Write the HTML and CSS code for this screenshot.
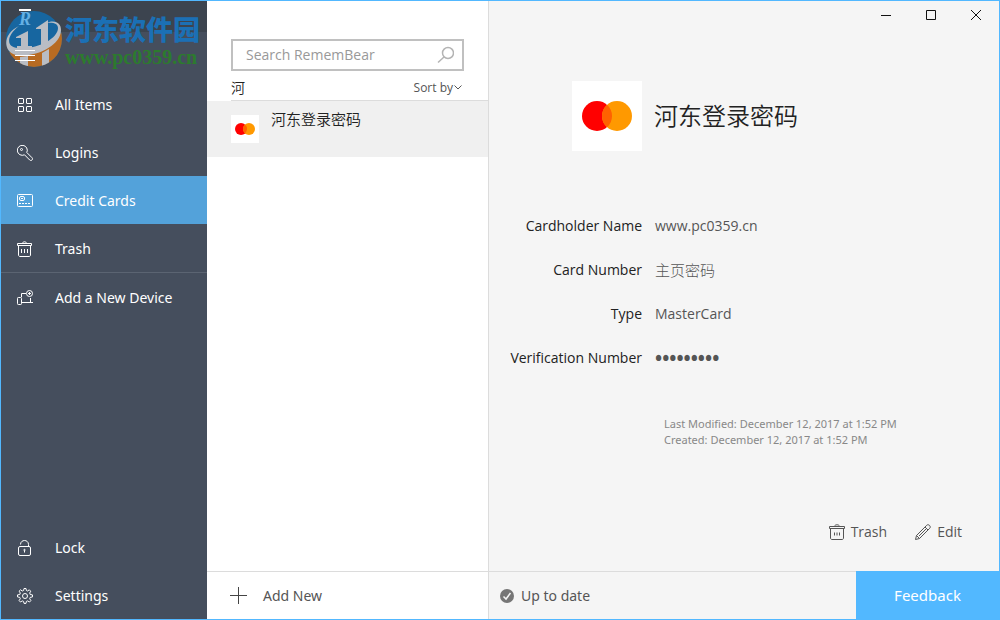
FILE: index.html
```html
<!DOCTYPE html>
<html lang="en">
<head>
    <meta charset="UTF-8">
    <meta name="viewport" content="width=device-width, initial-scale=1.0">
    <title>RememBear</title>
    <link rel="stylesheet" href="styles.css">
</head>
<body>
    <div class="window">
        <!-- Sidebar -->
        <aside class="sidebar">
            <div class="sidebar-top">
                <button class="menu-button" aria-label="Menu">
                    <svg width="20" height="14" viewBox="0 0 20 14" fill="none" stroke="#fff"><path d="M0 1.500h20M0 6.500h20M0 11.500h20"/></svg>
                </button>
            </div>
            <nav class="nav">
                <a href="#all" class="nav-item">
                    <svg class="icon" viewBox="0 0 16 16"><rect x="1.5" y="1.5" width="5" height="5" rx=".5"/><rect x="9.500" y="1.5" width="5" height="5" rx=".5"/><rect x="1.5" y="9.500" width="5" height="5" rx=".5"/><rect x="9.500" y="9.500" width="5" height="5" rx=".5"/></svg>
                    All Items
                </a>
                <a href="#logins" class="nav-item">
                    <svg class="icon" viewBox="0 0 16 16"><path d="M9.800 7.500l5.300 5.300c.9.900.3 2.700-1.300 2.700-.5 0-.8-.2-1.100-.5L7.500 9.800A5 5 0 1 1 9.800 7.500z"/><circle cx="4.500" cy="4.500" r="1"/></svg>
                    Logins
                </a>
                <a href="#cards" class="nav-item active">
                    <svg class="icon" viewBox="0 0 16 16"><rect x=".5" y="1.500" width="15" height="12" rx="1"/><rect x="2.500" y="3.500" width="5" height="4" rx="1.500"/><path d="M4 5.500h2"/><path d="M2 10.500h12" stroke-dasharray="2 1"/></svg>
                    Credit Cards
                </a>
                <a href="#trash" class="nav-item">
                    <svg class="icon" viewBox="0 0 16 16"><path d="M.5 4.500v-2h14v2zM1.500 4.500v9.500c0 .8.500 1.500 1.500 1.500h9c1 0 1.500-.7 1.500-1.500V4.500M5.500 2.500c0-2.300 4-2.300 4 0M4.500 8v4M7.500 8v4M10.500 8v4"/></svg>
                    Trash
                </a>
                <a href="#device" class="nav-item device">
                    <svg class="icon" viewBox="0 0 16 16"><path d="M9 3.500H4.500V7M13.500 8v4.500M5 12.500h11"/><rect x=".5" y="7.500" width="4" height="7" rx=".8"/><circle cx="12.500" cy="3.500" r="3"/><path d="M12.500 2v3M11 3.500h3"/></svg>
                    Add a New Device
                </a>
            </nav>
            <nav class="nav nav-bottom">
                <a href="#lock" class="nav-item">
                    <svg class="icon" viewBox="0 0 16 16"><rect x="1.500" y="6.500" width="12" height="9" rx="1.500"/><path d="M3.500 4.500c0-5.300 8-5.300 8 0v2M7.500 10.500v2"/><circle cx="7.500" cy="10" r=".7"/></svg>
                    Lock
                </a>
                <a href="#settings" class="nav-item">
                    <svg class="icon" viewBox="0 0 16 16"><path d="M6.600 2.500L7 .5h2l.4 2 1.200.5 1.700-1.200 1.400 1.400L12.700 5l.5 1.500 2.300.4v2l-2.300.5-.5 1.300 1.200 1.900-1.400 1.400-1.900-1.100-1.200.5-.4 2H7l-.4-2-1.300-.5-1.800 1.100-1.400-1.400 1.200-1.900-.5-1.300-2.300-.5v-2l2.300-.4L3.300 5 2.100 3.200l1.400-1.400L5.300 3z"/><circle cx="8" cy="8" r="2.500"/></svg>
                    Settings
                </a>
            </nav>
            <div class="watermark">
                <svg width="60" height="60" viewBox="0 0 60 60">
                    <defs><clipPath id="disc"><circle cx="30" cy="30" r="28"/></clipPath></defs>
                    <g clip-path="url(#disc)">
                        <path fill="#1766a0" d="M0 0h60v60H0z"/>
                        <path fill="#b86b22" d="M0 40c7 5 18 6 30 3 14-3 23-10 28-22l4 2v38H0z"/>
                        <path fill="#b9bdc4" d="M16 48l8-1v13h-8zM38 44l7-4v15l-7 5z"/>
                    </g>
                    <path fill="#b9bdc4" d="M15 17C3 26 1 38 14 39c18 2 40-9 40-20 0-5-5-6-13-5 11-4 16 0 16 7 0 16-26 28-45 25C-1 43-2 25 15 17z"/>
                    <path fill="#b9bdc4" d="M12 28l12-6v15h4v4H13v-4h4V29h-5zM32 19l12-8v22h4v3l-15 5v-4h4V20h-5z"/>
                </svg>
                <span class="watermark-letter">R</span>
                <div class="watermark-text">
                    <span class="watermark-name" lang="zh-CN">河东软件园</span>
                    <span class="watermark-url">www.pc0359.cn</span>
                </div>
            </div>
        </aside>

        <!-- Item list -->
        <section class="list">
            <div class="search">
                <input type="text" class="search-input" placeholder="Search RememBear" aria-label="Search RememBear">
                <svg class="search-icon" width="18" height="18" viewBox="0 0 18 18" fill="none" stroke="#b4b4b4" stroke-width="1.500"><circle cx="12" cy="7" r="5.500"/><path d="M8 11l-6 5.500"/></svg>
            </div>
            <div class="list-header">
                <span lang="zh-CN">河</span>
                <button class="sort">Sort by<svg width="8" height="5" viewBox="0 0 8 5" fill="none" stroke="#555"><path d="M.5.5L4 4 7.500.5"/></svg></button>
            </div>
            <a href="#item" class="list-item">
                <svg class="card-logo" viewBox="0 0 70 70"><path fill="#fff" d="M0 0h70v70H0z"/><circle cx="25" cy="35" r="15" fill="#f00"/><circle cx="45" cy="35" r="15" fill="#f90"/><path fill="#ff6200" d="M35 23.800a15 15 0 0 1 0 22.400 15 15 0 0 1 0-22.400z"/></svg>
                <span lang="zh-CN">河东登录密码</span>
            </a>
            <button class="add-new">
                <svg width="17" height="17" viewBox="0 0 17 17" stroke="#444"><path d="M8.500 0v17M0 8.500h17"/></svg>
                Add New
            </button>
        </section>

        <!-- Item detail -->
        <main class="detail">
            <div class="window-controls">
                <button aria-label="Minimize"><svg width="12" height="12" viewBox="0 0 12 12"><path d="M1 6.500h10"/></svg></button>
                <button aria-label="Maximize"><svg width="12" height="12" viewBox="0 0 12 12"><path d="M1.500 1.500h9v9h-9z"/></svg></button>
                <button aria-label="Close"><svg width="12" height="12" viewBox="0 0 12 12"><path d="M1 1l10 10M11 1L1 11"/></svg></button>
            </div>
            <div class="detail-title">
                <svg class="card-logo-large" viewBox="0 0 70 70"><path fill="#fff" d="M0 0h70v70H0z"/><circle cx="25" cy="35" r="15" fill="#f00"/><circle cx="45" cy="35" r="15" fill="#f90"/><path fill="#ff6200" d="M35 23.800a15 15 0 0 1 0 22.400 15 15 0 0 1 0-22.400z"/></svg>
                <h1 lang="zh-CN">河东登录密码</h1>
            </div>
            <dl class="fields">
                <dt>Cardholder Name</dt>
                <dd>www.pc0359.cn</dd>
                <dt>Card Number</dt>
                <dd lang="zh-CN">主页密码</dd>
                <dt>Type</dt>
                <dd>MasterCard</dd>
                <dt>Verification Number</dt>
                <dd class="dots">•••••••••</dd>
            </dl>
            <div class="meta">
                <p>Last Modified: December 12, 2017 at 1:52 PM</p>
                <p>Created: December 12, 2017 at 1:52 PM</p>
            </div>
            <div class="actions">
                <button>
                    <svg class="icon" viewBox="0 0 16 16"><path d="M.5 4.500v-2h15v2zM1.500 4.500v9.500c0 .8.500 1.500 1.500 1.500h10c1 0 1.500-.7 1.500-1.500V4.500M5.500 2.500c0-2.300 5-2.300 5 0M5.500 8.500v3M8 8.500v3M10.500 8.500v3"/></svg>
                    Trash
                </button>
                <button>
                    <svg class="icon" viewBox="0 0 16 16"><path d="M.5 15.500l1-4L11.700 1.300c1.800-1.800 4.800 1.200 3 3L4.500 14.500zM1.500 11.500l3 3M10 3l3 3M4 12l7-7"/></svg>
                    Edit
                </button>
            </div>
            <footer class="status">
                <svg width="14" height="14" viewBox="0 0 14 14"><circle cx="7" cy="7" r="7" fill="#767676"/><path d="M3.500 7.500L6 10l4.500-6" fill="none" stroke="#f5f5f5" stroke-width="1.500"/></svg>
                <span>Up to date</span>
                <button class="feedback">Feedback</button>
            </footer>
        </main>
    </div>
</body>
</html>
```
FILE: styles.css
```css
* {
    box-sizing: border-box;
}

body {
    margin: 0;
    font-family: "Open Sans", "Noto Sans CJK SC", sans-serif;
    font-size: 14px;
    line-height: 20px;
    color: #222;
}

button {
    font: inherit;
    color: inherit;
    background: none;
    border: 0;
    padding: 0;
    cursor: pointer;
}

a {
    color: inherit;
    text-decoration: none;
}

.window {
    display: grid;
    grid-template-columns: 206px 282px 1fr;
    min-height: 100vh;
    border: 1px solid #52b8ff;
}

.icon {
    width: 16px;
    height: 16px;
    fill: none;
    stroke: currentColor;
    flex: none;
}

/* Sidebar */
.sidebar {
    position: relative;
    display: flex;
    flex-direction: column;
    background-color: #454e5d;
    color: #fff;
    font-family: "Noto Sans", sans-serif;
}

.sidebar-top {
    height: 79px;
    padding: 48px 14px 0;
    background: linear-gradient(#3c444f 31px, transparent 31px);
}

.menu-button {
    position: relative;
    z-index: 1;
    display: flex;
}

.nav-item {
    display: flex;
    align-items: center;
    gap: 22px;
    height: 48px;
    padding: 1px 16px 0;
}

.active {
    background-color: #53a2da;
}

.device {
    height: 49px;
    border-top: 1px solid #5b6472;
}

.nav-bottom {
    margin-top: auto;
}

.watermark {
    position: absolute;
    top: 8px;
    left: 3px;
    display: flex;
    gap: 1px;
    pointer-events: none;
}

.watermark-letter {
    position: absolute;
    top: 0;
    left: 15px;
    font: italic bold 18px/16px "Liberation Serif", serif;
    color: #64b0e4;
    border-top: 2px solid #fff;
}

.watermark-text {
    display: flex;
    flex-direction: column;
    padding-top: 5px;
}

.watermark-name {
    font: 900 27px/30px "Noto Sans CJK SC", sans-serif;
    color: #1b70b5;
}

.watermark-url {
    font: bold 20px/26px "Liberation Serif", serif;
    color: #2c7b2e;
}

/* Item list */
.list {
    display: flex;
    flex-direction: column;
    background-color: #fff;
    border-right: 1px solid #dcdcdc;
}

.search {
    display: flex;
    align-items: center;
    height: 32px;
    margin: 38px 24px 0;
    padding: 0 8px 0 13px;
    border: 2px solid #c0c0c0;
}

.search-input {
    flex: 1;
    min-width: 0;
    padding: 0;
    border: 0;
    outline: 0;
    font: inherit;
}

.search-input::placeholder {
    color: #999;
}

.list-header {
    display: flex;
    align-items: center;
    justify-content: space-between;
    height: 30px;
    margin-left: 24px;
    padding: 4px 26px 0 0;
    border-bottom: 1px solid #dcdcdc;
    font-weight: 350;
}

.sort {
    display: flex;
    align-items: center;
    gap: 1px;
    font-size: 12px;
    font-weight: 400;
    color: #555;
}

.list-item {
    display: flex;
    gap: 12px;
    height: 56px;
    padding: 8px 24px;
    background-color: #f0f0f0;
    font-size: 15px;
    font-weight: 350;
}

.card-logo {
    width: 28px;
    height: 28px;
    margin-top: 6px;
}

.add-new {
    display: flex;
    align-items: center;
    gap: 16px;
    height: 48px;
    margin-top: auto;
    padding: 0 23px;
    border-top: 1px solid #dcdcdc;
    font-family: "Noto Sans", sans-serif;
    color: #555;
}

/* Item detail */
.detail {
    display: flex;
    flex-direction: column;
    background-color: #f5f5f5;
}

.window-controls {
    display: flex;
    justify-content: flex-end;
    height: 28px;
    padding-right: 1px;
}

.window-controls button {
    display: flex;
    align-items: center;
    justify-content: center;
    width: 45px;
}

.window-controls svg {
    fill: none;
    stroke: #111;
}

.detail-title {
    display: flex;
    align-items: center;
    gap: 12px;
    margin-top: 52px;
    padding-left: 83px;
}

.detail-title h1 {
    margin: 0;
    font-size: 24px;
    font-weight: 350;
    line-height: 36px;
}

.card-logo-large {
    width: 70px;
    height: 70px;
}

.fields {
    display: grid;
    grid-template-columns: 30% 1fr;
    grid-auto-rows: 44px;
    align-items: center;
    column-gap: 13px;
    margin: 53px 0 0;
}

.fields dt {
    text-align: right;
}

.fields dd {
    margin: 0;
    color: #555;
}

.fields dd:lang(zh) {
    font-size: 15px;
    font-weight: 300;
}

.fields .dots {
    font-size: 19px;
    font-weight: 700;
}

.meta {
    margin: 36px 0 32px;
    padding-left: 175px;
    font-family: "Noto Sans", sans-serif;
    font-size: 11px;
    line-height: 16px;
    color: #888;
}

.meta p {
    margin: 0;
}

.actions {
    display: flex;
    justify-content: flex-end;
    gap: 28px;
    margin-top: auto;
    padding: 0 37px 29px;
    color: #555;
}

.actions button {
    display: flex;
    align-items: center;
    gap: 6px;
}

.status {
    display: flex;
    align-items: center;
    gap: 7px;
    height: 48px;
    padding-left: 11px;
    border-top: 1px solid #dcdcdc;
    font-family: "Noto Sans", sans-serif;
    color: #555;
}

.feedback {
    align-self: stretch;
    width: 143px;
    margin-top: -1px;
    margin-left: auto;
    background-color: #52b8ff;
    color: #fff;
    font-size: 15px;
}
```
